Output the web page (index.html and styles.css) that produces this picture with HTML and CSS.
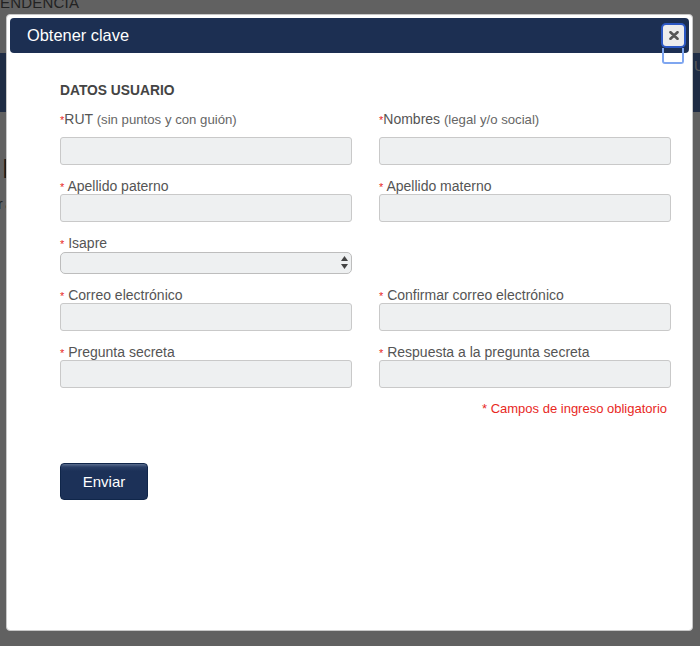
FILE: index.html
```html
<!DOCTYPE html>
<html lang="es">
<head>
    <meta charset="UTF-8">
    <meta name="viewport" content="width=device-width, initial-scale=1.0">
    <title>Obtener clave</title>
    <link rel="stylesheet" href="styles.css">
</head>
<body>

    <div class="page">
        <div class="page-header">
            <div class="brand">ENDENCIA</div>
        </div>
        <div class="page-nav">
            <span class="nav-user">Usuario</span>
        </div>
        <div class="page-main">
            <h1 class="page-title">Estimado usuario</h1>
            <p class="page-text">ra ingresar al sistema debe solicitar una clave de acceso</p>
        </div>
    </div>

    <div class="overlay">
        <div class="dialog">
            <div class="dialog-title">
                <span>Obtener clave</span>
                <button class="close-btn" type="button" aria-label="Cerrar">
                    <svg width="10" height="9" viewBox="0 0 10 9">
                        <path d="M1.5 1.2 L8.5 7.8 M8.5 1.2 L1.5 7.8" stroke="#555" stroke-width="2.6" stroke-linecap="round"/>
                    </svg>
                </button>
            </div>

            <form class="dialog-body">
                <h3 class="section-title">DATOS USUARIO</h3>

                <div class="form-grid">
                    <div class="field field-first">
                        <label><span class="req">*</span>RUT <span class="hint">(sin puntos y con guión)</span></label>
                        <input type="text" class="input">
                    </div>
                    <div class="field field-first">
                        <label><span class="req">*</span>Nombres <span class="hint">(legal y/o social)</span></label>
                        <input type="text" class="input">
                    </div>

                    <div class="field">
                        <label><span class="req">*</span> Apellido paterno</label>
                        <input type="text" class="input">
                    </div>
                    <div class="field">
                        <label><span class="req">*</span> Apellido materno</label>
                        <input type="text" class="input">
                    </div>

                    <div class="field">
                        <label><span class="req">*</span> Isapre</label>
                        <div class="select-wrap">
                            <select class="select"></select>
                            <svg class="select-arrows" width="7" height="13" viewBox="0 0 7 13">
                                <polygon points="3.5,0 7,5 0,5" fill="#444"/>
                                <polygon points="0,8 7,8 3.5,13" fill="#444"/>
                            </svg>
                        </div>
                    </div>
                    <div></div>

                    <div class="field">
                        <label><span class="req">*</span> Correo electrónico</label>
                        <input type="text" class="input">
                    </div>
                    <div class="field">
                        <label><span class="req">*</span> Confirmar correo electrónico</label>
                        <input type="text" class="input">
                    </div>

                    <div class="field">
                        <label><span class="req">*</span> Pregunta secreta</label>
                        <input type="text" class="input">
                    </div>
                    <div class="field">
                        <label><span class="req">*</span> Respuesta a la pregunta secreta</label>
                        <input type="text" class="input">
                    </div>
                </div>

                <p class="required-note">* Campos de ingreso obligatorio</p>

                <button class="send-btn" type="button">Enviar</button>
            </form>
        </div>
    </div>

</body>
</html>
```

FILE: styles.css
```css
* {
    box-sizing: border-box;
}
html, body {
    margin: 0;
    height: 100%;
}
body {
    font-family: "Liberation Sans", Arial, sans-serif;
    background: #fff;
    overflow: hidden;
}

/* page behind the modal */
.page-header {
    height: 53px;
    overflow: hidden;
}
.brand {
    margin-top: -5px;
    font-size: 15px;
    line-height: 16px;
    letter-spacing: 0.2px;
    color: #5a5a5a;
}
.page-nav {
    height: 59px;
    background: #5274b3;
    padding: 5px 0 0 694px;
    white-space: nowrap;
    overflow: hidden;
    font-size: 14px;
    color: #e6e6e6;
}
.page-main {
    padding: 0 0 0 2px;
    white-space: nowrap;
    overflow: hidden;
}
.page-title {
    margin: 42px 0 0;
    font-size: 28px;
    line-height: 30px;
    font-weight: normal;
    color: #444;
}
.page-text {
    margin: 12px 0 0 -4px;
    font-size: 14px;
    color: #555;
    letter-spacing: 2.6px;
}

/* modal */
.overlay {
    position: fixed;
    inset: 0;
    background: rgba(0, 0, 0, 0.62);
    padding: 14px 7px 15px 6px;
}
.dialog {
    height: 100%;
    background: #fff;
    border: 1px solid #c8c8c8;
    border-radius: 4px;
    padding: 3px;
}
.dialog-title {
    display: flex;
    align-items: center;
    justify-content: space-between;
    height: 35px;
    padding: 0 5px 0 17px;
    background: #1c2f52;
    border-radius: 4px;
    color: #fff;
    font-size: 16.4px;
}
.close-btn {
    position: relative;
    display: flex;
    align-items: center;
    justify-content: center;
    width: 21px;
    height: 21px;
    padding: 0;
    border: none;
    border-radius: 3px;
    background: #ececec;
    box-shadow: 0 0 0 2px #2c58c4;
    cursor: pointer;
}
.close-btn::after {
    content: "";
    position: absolute;
    left: -1px;
    right: 0;
    top: 23px;
    height: 14px;
    border: 2px solid #7fa6f0;
    border-top: none;
    border-radius: 0 0 3px 3px;
}

.dialog-body {
    padding: 30px 18px 0 50px;
}
.section-title {
    margin: 0 0 12px;
    font-size: 13.8px;
    line-height: 16px;
    font-weight: bold;
    color: #444;
}
.form-grid {
    display: grid;
    grid-template-columns: 1fr 1fr;
    column-gap: 27px;
    row-gap: 13px;
}
.field label {
    display: block;
    height: 16px;
    font-size: 14px;
    line-height: 16px;
    color: #555;
    white-space: nowrap;
}
.field-first label {
    margin-bottom: 10px;
}
.req {
    color: #e8281e;
    font-size: 11px;
    line-height: 0;
}
.hint {
    font-size: 13.2px;
    line-height: 0;
    color: #666;
}
.input {
    display: block;
    width: 100%;
    height: 28px;
    margin: 0;
    background: #eef0f1;
    border: 1px solid #c9c9c9;
    border-radius: 3px;
}
.select-wrap {
    position: relative;
    padding-top: 1px;
}
.select {
    display: block;
    width: 100%;
    height: 22px;
    margin: 0;
    appearance: none;
    -webkit-appearance: none;
    background: #eef0f1;
    border: 1px solid #bdbdbd;
    border-radius: 5px;
}
.select-arrows {
    position: absolute;
    right: 4px;
    top: 5px;
    pointer-events: none;
}
.required-note {
    margin: 13px 0 0;
    padding-right: 4px;
    text-align: right;
    font-size: 13px;
    line-height: 16px;
    color: #e8281e;
}
.send-btn {
    display: block;
    width: 88px;
    height: 37px;
    margin-top: 46px;
    padding: 0;
    border: 1px solid #10264a;
    border-radius: 4px;
    background: linear-gradient(#5a6d8e 0, #2a3f66 3px, #1c3158 7px, #1c3158 100%);
    color: #fff;
    font-family: "Liberation Sans", Arial, sans-serif;
    font-size: 15px;
    cursor: pointer;
}
```
